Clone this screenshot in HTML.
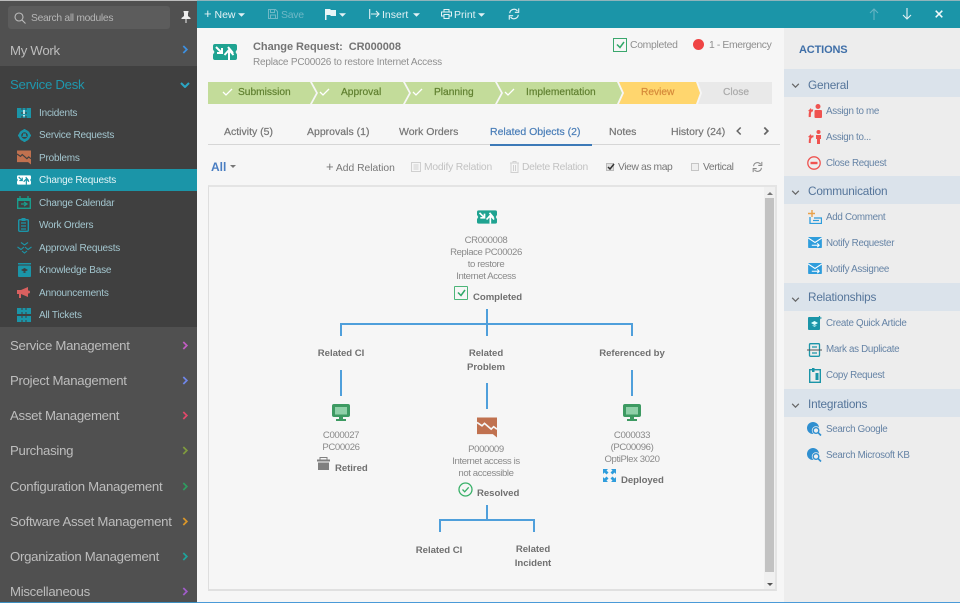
<!DOCTYPE html>
<html><head><meta charset="utf-8"><style>
*{box-sizing:border-box}
html,body{margin:0;padding:0}
body{width:960px;height:603px;overflow:hidden;position:relative;background:#f6f6f6;font-family:"Liberation Sans",sans-serif;font-size:10.5px;color:#777}
div,span.t,svg.a{position:absolute}
.t{position:absolute;white-space:nowrap;line-height:14px}
.c{transform:translateX(-50%);text-align:center}
.m{font-size:13.2px;color:#bdbdbd;left:10px;line-height:18px;letter-spacing:-.28px}
.s{font-size:10px;color:#a3c6cf;left:39px;letter-spacing:-.2px}
.tab{font-size:10.5px;color:#757575;top:125px;-webkit-text-stroke:.2px #757575}
.tb{font-size:10.5px;color:#e4f2f5;top:8px}
.st{font-size:10.2px;top:86px;-webkit-text-stroke:.2px currentColor}
.h{left:784px;width:176px;height:28px;background:#dbe3eb}
.ht{font-size:11.8px;color:#55759a;left:808px;letter-spacing:-.2px}
.at{font-size:9.8px;color:#6583a5;left:826px;letter-spacing:-.3px}
.lb{font-size:9.6px;font-weight:bold;color:#707070;line-height:13.5px;letter-spacing:-.05px}
.nd{font-size:9.6px;color:#8a8a8a;line-height:12px;letter-spacing:-.4px}
.l{background:#4f9fdb}
</style></head><body>
<svg width="0" height="0" style="position:absolute"><defs>
<symbol id="cr" viewBox="0 0 24 16"><path d="M2 0H22a2 2 0 0 1 2 2V5.500L22.500 8 24 10.500V14a2 2 0 0 1-2 2H2a2 2 0 0 1-2-2V10.500L1.500 8 0 5.500V2A2 2 0 0 1 2 0z" fill="currentColor"/><path d="M3 3l6 6M9 4v5H4M16 16V7M11.500 11l4.500-5 4.500 5M15 3l5 6" fill="none" stroke="var(--a,#fff)" stroke-width="2"/></symbol>
<symbol id="pb" viewBox="0 0 24 24"><path d="M0 0H24V24L19 20H0z" fill="currentColor"/><path d="M0 6L6 10 9 7 17 14 20 11 24 14" fill="none" stroke="var(--a,#f6f6f6)" stroke-width="2"/></symbol>
<symbol id="mon" viewBox="0 0 18 18"><rect x="0" y="0" width="18" height="13" rx="2" fill="#3d9a62"/><rect x="3" y="3" width="12" height="7.500" fill="#8fd0a8"/><path d="M7 13h4v2h3v2H4v-2h3z" fill="#3d9a62"/></symbol>
<symbol id="mail" viewBox="0 0 15 12"><rect width="15" height="12" rx="1" fill="#2f9ddc"/><path d="M0 1l7.500 5L15 1" fill="none" stroke="#fff" stroke-width="1.200"/><path d="M4 9h8M10 7l2 2-2 2" fill="none" stroke="#fff" stroke-width="1.200"/></symbol>
<symbol id="srch" viewBox="0 0 15 15"><circle cx="6" cy="6" r="6" fill="#2f8fd0"/><circle cx="9" cy="8.500" r="4.200" fill="#efefef"/><circle cx="9" cy="8.500" r="2.800" fill="none" stroke="#2f8fd0" stroke-width="1.400"/><path d="M11 10.500l3 3" stroke="#2f8fd0" stroke-width="1.600"/></symbol>
<symbol id="chev" viewBox="0 0 8 10"><path d="M1.500 1l4 4-4 4" fill="none" stroke="currentColor" stroke-width="2"/></symbol>
<symbol id="dn" viewBox="0 0 10 6"><path d="M1 1l4 4 4-4" fill="none" stroke="#666" stroke-width="1.500"/></symbol>
<symbol id="ref" viewBox="0 0 14 14"><path d="M2 6a5 5 0 0 1 9-2.500M12 8a5 5 0 0 1-9 2.500" fill="none" stroke="currentColor" stroke-width="1.300"/><path d="M12.500 0.500V5H8M1.500 13.500V9H6" fill="none" stroke="currentColor" stroke-width="1.300"/></symbol>
<symbol id="ct" viewBox="0 0 8 4"><path d="M0 0h8L4 4z" fill="currentColor"/></symbol>
</defs></svg>

<!-- sidebar -->
<div style="left:0;top:0;width:197px;height:603px;background:#505050"></div>
<div style="left:0;top:0;width:197px;height:1px;background:#bcbcbc"></div>
<div style="left:0;top:66px;width:197px;height:261px;background:#404040"></div>
<div style="left:8px;top:6px;width:162px;height:23px;background:#5c5c5c;border-radius:3px"></div>
<svg class="a" style="left:14px;top:12px" width="12" height="12" viewBox="0 0 12 12"><circle cx="5" cy="5" r="4" fill="none" stroke="#bbb" stroke-width="1.100"/><path d="M8 8l3.500 3.500" stroke="#bbb" stroke-width="1.100"/></svg>
<span class="t" style="left:31px;top:12px;font-size:10.3px;letter-spacing:-.3px;color:#b5b5b5">Search all modules</span>
<svg class="a" style="left:181px;top:11px" width="10" height="12" viewBox="0 0 10 12"><path d="M2.500 0h5v1L7 2v3l2.500 2v1H5.500v4H4.500V8H.5V7L3 5V2l-.5-1z" fill="#eee"/></svg>
<span class="t m" style="top:42px">My Work</span>
<svg class="a" style="left:182px;top:45px;color:#3d8fe0" width="7" height="9"><use href="#chev"/></svg>
<span class="t m" style="top:76px;color:#1f97ad">Service Desk</span>
<svg class="a" style="left:180px;top:82px" width="10" height="6" viewBox="0 0 10 6"><path d="M1 1l4 4 4-4" fill="none" stroke="#2ba6c4" stroke-width="2"/></svg>
<div style="left:0;top:169px;width:197px;height:22px;background:#1b95a8"></div>

<!-- sub icons -->
<svg class="a" style="left:17px;top:108px" width="14" height="10" viewBox="0 0 14 10"><rect width="14" height="10" fill="#1b95a8"/><path d="M5 0v2M5 4v2M5 8v2M9 0v2M9 4v2M9 8v2" stroke="#404040"/><path d="M7 2v4M7 7v1.500" stroke="#fff" stroke-width="1.400"/></svg>
<svg class="a" style="left:18px;top:129px" width="13" height="13" viewBox="0 0 13 13"><circle cx="6.500" cy="6.500" r="4.500" fill="none" stroke="#1b95a8" stroke-width="2.500"/><path d="M6.500 0v2M6.500 11v2M0 6.500h2M11 6.500h2" stroke="#1b95a8" stroke-width="2"/><path d="M4 8h5L8 6V4.500H5V6z" fill="#1b95a8"/></svg>
<svg class="a" style="left:17px;top:150px;color:#c0714f;--a:#404040" width="14" height="15"><use href="#pb"/></svg>
<svg class="a" style="left:17px;top:175px;color:#fff;--a:#1b95a8" width="14" height="10"><use href="#cr"/></svg>
<svg class="a" style="left:17px;top:196px" width="14" height="13" viewBox="0 0 14 13"><rect x=".7" y="2.700" width="12.600" height="9.600" fill="none" stroke="#1a9c8c" stroke-width="1.400"/><rect y="2" width="14" height="3" fill="#1a9c8c"/><path d="M3 0v3M11 0v3M4 8h6M7 6l3 2-3 2" stroke="#1a9c8c" stroke-width="1.300" fill="none"/></svg>
<svg class="a" style="left:18px;top:218px" width="11" height="14" viewBox="0 0 11 14"><rect x=".7" y="1.700" width="9.600" height="11.600" rx="1" fill="none" stroke="#1b95a8" stroke-width="1.400"/><path d="M3 5h5M3 8h5M3 11h5" stroke="#1b95a8" stroke-width="1.300"/><rect x="3.500" y="0" width="4" height="3" fill="#1b95a8"/></svg>
<svg class="a" style="left:17px;top:242px" width="15" height="12" viewBox="0 0 15 12"><path d="M4 .5L7.500 3 11 .5M.5 5L4 7.500 7 5M8 5l3 2.500L14.500 5M5 9l2.500 2L10 9" fill="none" stroke="#1b95a8" stroke-width="1.100"/></svg>
<svg class="a" style="left:18px;top:263px" width="13" height="14" viewBox="0 0 13 14"><rect y="0" width="13" height="1.500" fill="#1b95a8"/><rect y="2.500" width="13" height="11.500" rx="1" fill="#1b95a8"/><path d="M3 7l3.500-2L10 7 6.500 9zM4.500 9l2 1 2-1" fill="#404040"/></svg>
<svg class="a" style="left:17px;top:287px" width="13" height="12" viewBox="0 0 13 12"><path d="M0 3h4l7-3v10L4 7v4H2V7H0z" fill="#d9605f"/><circle cx="11.500" cy="5" r="1.500" fill="#d9605f"/></svg>
<svg class="a" style="left:17px;top:308px" width="14" height="14" viewBox="0 0 14 14"><rect width="14" height="6" fill="#1b95a8"/><rect y="8" width="14" height="6" fill="#1b95a8"/><path d="M5 0v2M5 4v2M9 0v2M9 4v2M5 8v2M5 12v2M9 8v2M9 12v2" stroke="#404040"/></svg>

<span class="t s" style="top:107px">Incidents</span>
<span class="t s" style="top:129px">Service Requests</span>
<span class="t s" style="top:152px">Problems</span>
<span class="t s" style="top:174px;color:#e3f3f6">Change Requests</span>
<span class="t s" style="top:197px">Change Calendar</span>
<span class="t s" style="top:219px">Work Orders</span>
<span class="t s" style="top:242px">Approval Requests</span>
<span class="t s" style="top:264px">Knowledge Base</span>
<span class="t s" style="top:287px">Announcements</span>
<span class="t s" style="top:309px">All Tickets</span>

<span class="t m" style="top:337px">Service Management</span>
<span class="t m" style="top:372px">Project Management</span>
<span class="t m" style="top:407px">Asset Management</span>
<span class="t m" style="top:442px">Purchasing</span>
<span class="t m" style="top:478px">Configuration Management</span>
<span class="t m" style="top:513px">Software Asset Management</span>
<span class="t m" style="top:548px">Organization Management</span>
<span class="t m" style="top:583px">Miscellaneous</span>
<svg class="a" style="left:182px;top:341px;color:#c05cc0" width="7" height="9"><use href="#chev"/></svg>
<svg class="a" style="left:182px;top:376px;color:#6f86e8" width="7" height="9"><use href="#chev"/></svg>
<svg class="a" style="left:182px;top:411px;color:#e0486a" width="7" height="9"><use href="#chev"/></svg>
<svg class="a" style="left:182px;top:446px;color:#7f9a3e" width="7" height="9"><use href="#chev"/></svg>
<svg class="a" style="left:182px;top:482px;color:#2f9a60" width="7" height="9"><use href="#chev"/></svg>
<svg class="a" style="left:182px;top:517px;color:#d9962a" width="7" height="9"><use href="#chev"/></svg>
<svg class="a" style="left:182px;top:552px;color:#1fa39a" width="7" height="9"><use href="#chev"/></svg>
<svg class="a" style="left:182px;top:587px;color:#a05cc8" width="7" height="9"><use href="#chev"/></svg>

<!-- top bar -->
<div style="left:197px;top:0;width:763px;height:28px;background:#1b95a8;border-top:1px solid #8fb4bb"></div>
<span class="t tb" style="left:204px"><span style="font-size:13px;line-height:12px">+</span> New</span>
<svg class="a" style="left:238px;top:13px;color:#e4f2f5" width="7" height="4"><use href="#ct"/></svg>
<svg class="a" style="left:268px;top:9px" width="10" height="10" viewBox="0 0 10 10"><path d="M.5.500h7l2 2v7H.5zM2.500.500v3h4v-3M2.500 9.500v-3.500h5v3.500" fill="none" stroke="#6fb8c6"/></svg>
<span class="t tb" style="left:281px;color:#6fb8c6;letter-spacing:-.3px">Save</span>
<svg class="a" style="left:325px;top:8px" width="11" height="12" viewBox="0 0 11 12"><path d="M0 1h5l1 1h5v6H6L5 7H1.500v5H0z" fill="#e9f5f7"/></svg>
<svg class="a" style="left:339px;top:13px;color:#e4f2f5" width="7" height="4"><use href="#ct"/></svg>
<svg class="a" style="left:369px;top:9px" width="11" height="10" viewBox="0 0 11 10"><path d="M.7 0v10M2 5h8M7 2l3 3-3 3" fill="none" stroke="#e4f2f5" stroke-width="1.100"/></svg>
<span class="t tb" style="left:382px">Insert</span>
<svg class="a" style="left:413px;top:13px;color:#e4f2f5" width="7" height="4"><use href="#ct"/></svg>
<svg class="a" style="left:441px;top:9px" width="11" height="10" viewBox="0 0 11 10"><path d="M3 3V.500h5V3M3 7H.5V3h10v4H8M3 5.500h5v4H3z" fill="none" stroke="#e4f2f5"/></svg>
<span class="t tb" style="left:454px">Print</span>
<svg class="a" style="left:478px;top:13px;color:#e4f2f5" width="7" height="4"><use href="#ct"/></svg>
<svg class="a" style="left:508px;top:8px;color:#e4f2f5" width="12" height="12"><use href="#ref"/></svg>
<svg class="a" style="left:869px;top:8px" width="10" height="12" viewBox="0 0 10 12"><path d="M5 12V1M1 5l4-4 4 4" fill="none" stroke="#66b4c3" stroke-width="1.100"/></svg>
<svg class="a" style="left:902px;top:8px" width="10" height="12" viewBox="0 0 10 12"><path d="M5 0v11M1 7l4 4 4-4" fill="none" stroke="#e4f2f5" stroke-width="1.100"/></svg>
<svg class="a" style="left:935px;top:10px" width="8" height="8" viewBox="0 0 8 8"><path d="M.7.700l6.600 6.600M7.300.700L.7 7.300" stroke="#f2fafb" stroke-width="1.500"/></svg>

<!-- header -->
<svg class="a" style="left:213px;top:44px;color:#1fa391" width="24" height="16"><use href="#cr"/></svg>
<span class="t" style="left:253px;top:40px;font-size:11px;font-weight:bold;letter-spacing:-.05px;color:#747474">Change Request:&nbsp; CR000008</span>
<span class="t" style="left:253px;top:56px;font-size:10px;letter-spacing:-.2px;color:#8f8f8f">Replace PC00026 to restore Internet Access</span>
<div style="left:613px;top:38px;width:14px;height:14px;border:1.500px solid #3aa76d"></div>
<svg class="a" style="left:616px;top:41px" width="9" height="8" viewBox="0 0 9 8"><path d="M1 3.500l3 3 4-5.500" fill="none" stroke="#2fa868" stroke-width="1.500"/></svg>
<span class="t" style="left:630px;top:39px;font-size:10.4px;letter-spacing:-.3px;color:#8f8f8f">Completed</span>
<div style="left:693px;top:39px;width:11px;height:11px;border-radius:50%;background:#ef4444"></div>
<span class="t" style="left:709px;top:39px;font-size:10.4px;letter-spacing:-.4px;color:#8f8f8f">1 - Emergency</span>

<!-- stepper -->
<svg class="a" style="left:208px;top:82px" width="565" height="22" viewBox="0 0 565 22">
<path d="M0 0H102L108 11 102 22H0z" fill="#c3dc9a"/>
<path d="M104 0H195L201 11 195 22H104L110 11z" fill="#c3dc9a"/>
<path d="M197 0H287L293 11 287 22H197L203 11z" fill="#c3dc9a"/>
<path d="M289 0H409L414 11 409 22H289L295 11z" fill="#c3dc9a"/>
<path d="M411 0H488L492 11 488 22H411L416 11z" fill="#ffd66e"/>
<path d="M490 0H564V22H490L494 11z" fill="#e9e9e9"/>
<g fill="none" stroke="#fff" stroke-width="1.300"><path d="M15 10l3 3 6-6M112 10l3 3 6-6M205 10l3 3 6-6M297 10l3 3 6-6"/></g>
</svg>
<span class="t st" style="left:238px;color:#5f7f2f">Submission</span>
<span class="t st" style="left:341px;color:#5f7f2f">Approval</span>
<span class="t st" style="left:434px;color:#5f7f2f">Planning</span>
<span class="t st" style="left:526px;color:#5f7f2f">Implementation</span>
<span class="t st" style="left:641px;color:#d68a3a">Review</span>
<span class="t st" style="left:723px;color:#aaa">Close</span>

<!-- tabs -->
<span class="t tab" style="left:224px">Activity (5)</span>
<span class="t tab" style="left:307px">Approvals (1)</span>
<span class="t tab" style="left:399px">Work Orders</span>
<span class="t tab" style="left:490px;color:#4a7eb8;-webkit-text-stroke:.2px #4a7eb8">Related Objects (2)</span>
<span class="t tab" style="left:609px">Notes</span>
<span class="t tab" style="left:671px">History (24)</span>
<svg class="a" style="left:735px;top:126px;color:#666" width="7" height="10" viewBox="0 0 8 10"><path d="M6.500 1l-4 4 4 4" fill="none" stroke="#666" stroke-width="1.700"/></svg>
<svg class="a" style="left:763px;top:126px;color:#666" width="7" height="10"><use href="#chev"/></svg>
<div style="left:208px;top:144px;width:572px;height:1px;background:#d6d6d6"></div>
<div style="left:490px;top:144px;width:102px;height:2px;background:#3d7ab8"></div>

<!-- toolbar -->
<span class="t" style="left:211px;top:160px;font-size:12px;font-weight:bold;color:#4a7ec2">All</span>
<svg class="a" style="left:230px;top:165px;color:#777" width="6" height="3"><use href="#ct"/></svg>
<span class="t" style="left:326px;top:161px;font-size:10.3px;color:#777"><span style="font-size:13px;line-height:12px">+</span> Add Relation</span>
<svg class="a" style="left:411px;top:162px" width="10" height="10" viewBox="0 0 10 10"><path d="M.5.500h9v9h-9zM2.500 3h5M2.500 5h5M2.500 7h5" fill="none" stroke="#d0d0d0"/></svg>
<span class="t" style="left:424px;top:161px;font-size:10.3px;letter-spacing:-.2px;color:#c2c2c2">Modify Relation</span>
<svg class="a" style="left:510px;top:161px" width="9" height="12" viewBox="0 0 9 12"><path d="M0 2h9M3 2V.500h3V2M1 2v9.500h7V2M3.500 4v6M5.500 4v6" fill="none" stroke="#d0d0d0"/></svg>
<span class="t" style="left:522px;top:161px;font-size:10.3px;letter-spacing:-.3px;color:#c2c2c2">Delete Relation</span>
<div style="left:606px;top:163px;width:8px;height:8px;background:#e0e0e0;border:1px solid #bbb"></div>
<svg class="a" style="left:607px;top:163px" width="8" height="8" viewBox="0 0 8 8"><path d="M1 4l2 2 4-5" fill="none" stroke="#333" stroke-width="1.500"/></svg>
<span class="t" style="left:618px;top:161px;font-size:10.3px;letter-spacing:-.4px;color:#777">View as map</span>
<div style="left:691px;top:163px;width:8px;height:8px;background:#efefef;border:1px solid #c5c5c5"></div>
<span class="t" style="left:703px;top:161px;font-size:10.3px;letter-spacing:-.4px;color:#777">Vertical</span>
<svg class="a" style="left:752px;top:161px;color:#888" width="11" height="12"><use href="#ref"/></svg>

<!-- map box -->
<div style="left:208px;top:185px;width:569px;height:406px;border:1px solid #dedede;border-top:2px solid #e4e4e4;border-right:2px solid #e4e4e4;border-bottom:2px solid #e0e0e0"></div>
<div style="left:764px;top:187px;width:11px;height:402px;background:#f0f0f0"></div>
<div style="left:765px;top:198px;width:9px;height:374px;background:#c2c2c2"></div>
<svg class="a" style="left:767px;top:192px;color:#777" width="6" height="3" viewBox="0 0 8 4"><path d="M0 4h8L4 0z" fill="#777"/></svg>
<svg class="a" style="left:767px;top:583px;color:#555" width="6" height="3"><use href="#ct"/></svg>

<!-- tree -->
<svg class="a" style="left:477px;top:210px;color:#1fa391" width="20" height="14"><use href="#cr"/></svg>
<span class="t nd c" style="left:486px;top:235px">CR000008<br>Replace PC00026<br>to restore<br>Internet Access</span>
<div style="left:454px;top:286px;width:14px;height:14px;border:1.500px solid #4cb578;border-radius:1px"></div>
<svg class="a" style="left:457px;top:289px" width="9" height="8" viewBox="0 0 9 8"><path d="M1 3.500l3 3 4-5.500" fill="none" stroke="#2fa868" stroke-width="1.500"/></svg>
<span class="t lb" style="left:473px;top:291px">Completed</span>

<div class="l" style="left:486px;top:309px;width:1.500px;height:27px"></div>
<div class="l" style="left:340px;top:323px;width:293px;height:1.500px"></div>
<div class="l" style="left:340px;top:323px;width:1.500px;height:13px"></div>
<div class="l" style="left:631px;top:323px;width:1.500px;height:13px"></div>
<span class="t lb c" style="left:341px;top:347px">Related CI</span>
<span class="t lb c" style="left:486px;top:347px">Related<br>Problem</span>
<span class="t lb c" style="left:632px;top:347px">Referenced by</span>
<div class="l" style="left:340px;top:370px;width:1.500px;height:26px"></div>
<div class="l" style="left:486px;top:383px;width:1.500px;height:26px"></div>
<div class="l" style="left:631px;top:370px;width:1.500px;height:26px"></div>

<svg class="a" style="left:332px;top:404px" width="18" height="18"><use href="#mon"/></svg>
<span class="t nd c" style="left:341px;top:430px">C000027<br>PC00026</span>
<svg class="a" style="left:317px;top:457px" width="13" height="13" viewBox="0 0 13 13"><rect x="3" y=".5" width="7" height="3" fill="none" stroke="#808080"/><rect y="2.500" width="13" height="2" fill="#808080"/><path d="M1 5.500h11V13H1z" fill="#808080"/></svg>
<span class="t lb" style="left:335px;top:462px">Retired</span>

<svg class="a" style="left:477px;top:417px;color:#c0714f" width="20" height="21"><use href="#pb"/></svg>
<span class="t nd c" style="left:486px;top:444px">P000009<br>Internet access is<br>not accessible</span>
<svg class="a" style="left:458px;top:482px" width="15" height="15" viewBox="0 0 15 15"><circle cx="7.500" cy="7.500" r="6.500" fill="none" stroke="#38b068" stroke-width="1.300"/><path d="M4.500 7.500l2.200 2.300 4-4.500" fill="none" stroke="#38b068" stroke-width="1.300"/></svg>
<span class="t lb" style="left:477px;top:487px">Resolved</span>
<div class="l" style="left:486px;top:505px;width:1.500px;height:15px"></div>
<div class="l" style="left:439px;top:519px;width:95px;height:1.500px"></div>
<div class="l" style="left:439px;top:519px;width:1.500px;height:13px"></div>
<div class="l" style="left:533px;top:519px;width:1.500px;height:13px"></div>
<span class="t lb c" style="left:439px;top:544px">Related CI</span>
<span class="t lb c" style="left:533px;top:543px">Related<br>Incident</span>

<svg class="a" style="left:623px;top:404px" width="18" height="18"><use href="#mon"/></svg>
<span class="t nd c" style="left:632px;top:430px">C000033<br>(PC00096)<br>OptiPlex 3020</span>
<svg class="a" style="left:603px;top:469px" width="13" height="13" viewBox="0 0 13 13"><path d="M0 0h5L3.500 1.500 5.500 3.500 3.500 5.500 1.500 3.500 0 5zM13 0v5L11.500 3.500 9.500 5.500 7.500 3.500 9.500 1.500 8 0zM0 13V8l1.500 1.500 2-2 2 2-2 2L5 13zM13 13H8l1.500-1.500-2-2 2-2 2 2L13 8z" fill="#2f9ddc"/></svg>
<span class="t lb" style="left:621px;top:474px">Deployed</span>

<!-- actions -->
<div style="left:784px;top:28px;width:176px;height:575px;background:#ededed"></div>
<span class="t" style="left:799px;top:43px;font-size:11px;font-weight:bold;letter-spacing:-.15px;color:#3f6fa8">ACTIONS</span>
<div class="h" style="top:69px"></div><div class="h" style="top:176px"></div><div class="h" style="top:283px"></div><div class="h" style="top:389px"></div>
<svg class="a" style="left:791px;top:83px" width="9" height="5"><use href="#dn"/></svg>
<svg class="a" style="left:791px;top:190px" width="9" height="5"><use href="#dn"/></svg>
<svg class="a" style="left:791px;top:297px" width="9" height="5"><use href="#dn"/></svg>
<svg class="a" style="left:791px;top:403px" width="9" height="5"><use href="#dn"/></svg>
<span class="t ht" style="top:78px">General</span>
<span class="t ht" style="top:184px">Communication</span>
<span class="t ht" style="top:290px">Relationships</span>
<span class="t ht" style="top:397px">Integrations</span>
<span class="t at" style="top:105px">Assign to me</span>
<span class="t at" style="top:131px">Assign to...</span>
<span class="t at" style="top:157px">Close Request</span>
<span class="t at" style="top:211px">Add Comment</span>
<span class="t at" style="top:237px">Notify Requester</span>
<span class="t at" style="top:263px">Notify Assignee</span>
<span class="t at" style="top:317px">Create Quick Article</span>
<span class="t at" style="top:343px">Mark as Duplicate</span>
<span class="t at" style="top:369px">Copy Request</span>
<span class="t at" style="top:423px">Search Google</span>
<span class="t at" style="top:449px">Search Microsoft KB</span>

<svg class="a" style="left:808px;top:104px" width="14" height="14" viewBox="0 0 14 14"><circle cx="10" cy="2.500" r="2.500" fill="#ef5350"/><rect x="6.500" y="6" width="7.500" height="8" rx="1" fill="#ef5350"/><path d="M5 6.500C2.500 6 1.500 8 1.800 13" fill="none" stroke="#ef5350" stroke-width="2.200"/><path d="M0 7l3-3 .5 4z" fill="#ef5350"/></svg>
<svg class="a" style="left:808px;top:130px" width="14" height="14" viewBox="0 0 14 14"><circle cx="10.500" cy="2" r="2" fill="#ef5350"/><path d="M8 5h5v4h-1v5H9V9H8z" fill="#ef5350"/><path d="M5.500 6.500C3 6 1.500 8 1.800 13" fill="none" stroke="#ef5350" stroke-width="2"/><path d="M0 7l3-3 .5 4z" fill="#ef5350"/></svg>
<svg class="a" style="left:807px;top:156px" width="14" height="14" viewBox="0 0 14 14"><circle cx="7" cy="7" r="6.200" fill="none" stroke="#ef5350" stroke-width="1.300"/><rect x="3.500" y="5.800" width="7" height="2.400" fill="#ef5350"/></svg>
<svg class="a" style="left:808px;top:210px" width="14" height="14" viewBox="0 0 14 14"><path d="M4 0v7M0 3.500h7" stroke="#e9a14a" stroke-width="1.400"/><path d="M2 7v6.500h11.500V8H6" fill="none" stroke="#2f9ddc" stroke-width="1.300"/><path d="M5 10.500h6" stroke="#2f9ddc" stroke-width="1.200"/></svg>
<svg class="a" style="left:808px;top:237px" width="14" height="11"><use href="#mail"/></svg>
<svg class="a" style="left:808px;top:263px" width="14" height="11"><use href="#mail"/></svg>
<svg class="a" style="left:808px;top:316px" width="14" height="14" viewBox="0 0 14 14"><rect y="1" width="12" height="13" rx="1" fill="#1b95a8"/><path d="M3 7l3.500-2L10 7 6.500 9zM4 9.500l2.500 1.200L9 9.500" fill="#dff"/><path d="M11.500 0v4M9.500 2h4" stroke="#1b95a8" stroke-width="1.200"/></svg>
<svg class="a" style="left:807px;top:343px" width="15" height="14" viewBox="0 0 15 14"><rect x="2.500" y=".7" width="10" height="12.600" rx="1" fill="none" stroke="#1b95a8" stroke-width="1.300"/><path d="M0 7h15" stroke="#555" stroke-width="1"/><path d="M5 4h5M5 10h5" stroke="#1b95a8" stroke-width="1.300"/></svg>
<svg class="a" style="left:809px;top:368px" width="12" height="15" viewBox="0 0 12 15"><rect x=".7" y="1.700" width="10.600" height="12.600" fill="none" stroke="#1b95a8" stroke-width="1.400"/><rect x="3" y="0" width="2.500" height="4" fill="#1b95a8"/><rect x="6.500" y="5" width="3" height="7" fill="#1b95a8"/></svg>
<svg class="a" style="left:807px;top:422px" width="15" height="15"><use href="#srch"/></svg>
<svg class="a" style="left:807px;top:448px" width="15" height="15"><use href="#srch"/></svg>

<div style="left:197px;top:602px;width:763px;height:1px;background:#4a9ad8"></div>
<div style="left:0;top:602px;width:197px;height:1px;background:#3d8fc0"></div>
</body></html>
